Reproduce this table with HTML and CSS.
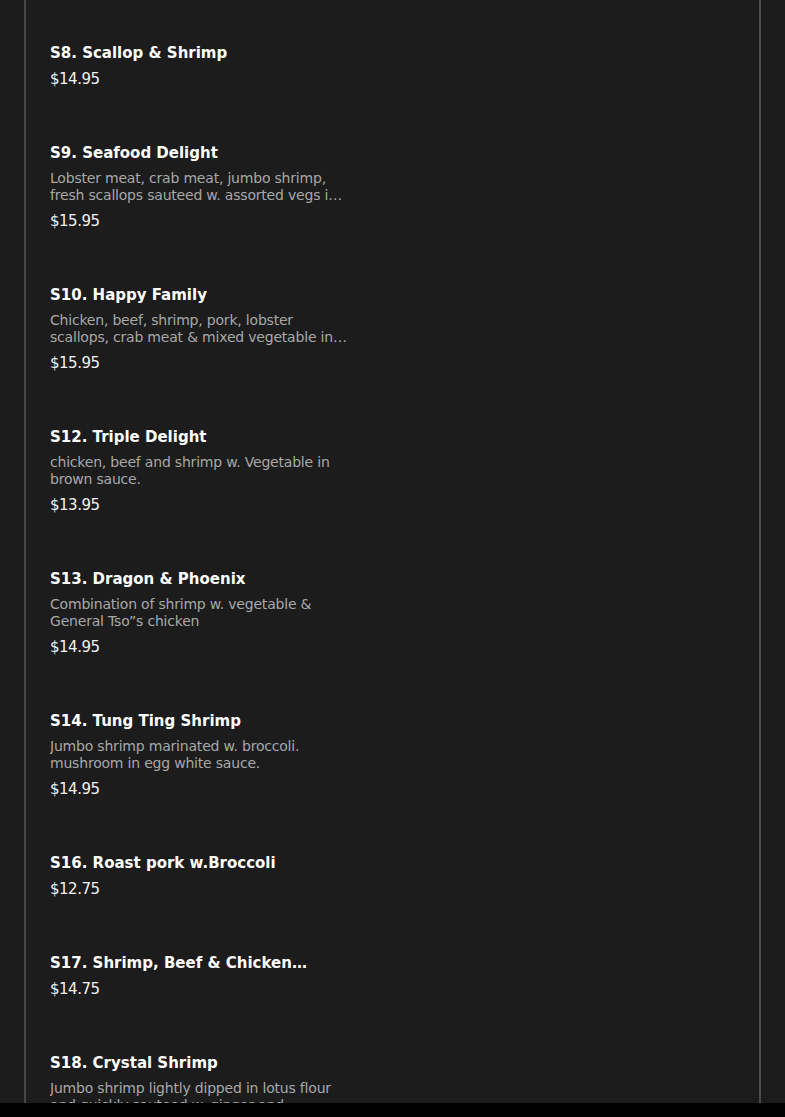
FILE: index.html
```html
<!DOCTYPE html>
<html lang="en">
<head>
<meta charset="utf-8">
<title>Menu</title>
<link rel="stylesheet" href="styles.css">
</head>
<body>
<main class="menu">
  <section class="item">
    <h3 class="title">S8. Scallop &amp; Shrimp</h3>
    <div class="price">$14.95</div>
  </section>
  <section class="item">
    <h3 class="title">S9. Seafood Delight</h3>
    <p class="desc">Lobster meat, crab meat, jumbo shrimp, fresh scallops sauteed w. assorted vegs in white sauce.</p>
    <div class="price">$15.95</div>
  </section>
  <section class="item">
    <h3 class="title">S10. Happy Family</h3>
    <p class="desc">Chicken, beef, shrimp, pork, lobster scallops, crab meat &amp; mixed vegetable in brown sauce.</p>
    <div class="price">$15.95</div>
  </section>
  <section class="item">
    <h3 class="title">S12. Triple Delight</h3>
    <p class="desc">chicken, beef and shrimp w. Vegetable in brown sauce.</p>
    <div class="price">$13.95</div>
  </section>
  <section class="item">
    <h3 class="title">S13. Dragon &amp; Phoenix</h3>
    <p class="desc">Combination of shrimp w. vegetable &amp; General Tso”s chicken</p>
    <div class="price">$14.95</div>
  </section>
  <section class="item">
    <h3 class="title">S14. Tung Ting Shrimp</h3>
    <p class="desc">Jumbo shrimp marinated w. broccoli. mushroom in egg white sauce.</p>
    <div class="price">$14.95</div>
  </section>
  <section class="item">
    <h3 class="title">S16. Roast pork w.Broccoli</h3>
    <div class="price">$12.75</div>
  </section>
  <section class="item">
    <h3 class="title">S17. Shrimp, Beef &amp; Chicken Combination</h3>
    <div class="price">$14.75</div>
  </section>
  <section class="item">
    <h3 class="title">S18. Crystal Shrimp</h3>
    <p class="desc">Jumbo shrimp lightly dipped in lotus flour and quickly sauteed w. ginger and scallions.</p>
    <div class="price">$14.95</div>
  </section>
</main>
<div class="bottom-bar"></div>
</body>
</html>
```
FILE: styles.css
```css
html, body {
  margin: 0;
  padding: 0;
  background: #1c1c1c;
  color: #ffffff;
  font-family: "DejaVu Sans", "Liberation Sans", sans-serif;
}

.menu {
  margin: 0 24px;
  padding: 16px 0 40px;
  border-left: 2px solid #474747;
  border-right: 2px solid #4a4a4a;
  display: flex;
  flex-direction: column;
}

.item {
  padding: 24px 24px 23px;
  width: 300px;
}

.title {
  margin: 0;
  padding-top: 2px;
  font-size: 15px;
  font-weight: 700;
  line-height: 22px;
  color: #ffffff;
  display: -webkit-box;
  -webkit-box-orient: vertical;
  -webkit-line-clamp: 1;
  overflow: hidden;
}

.desc {
  margin: 6px 0 2px;
  font-size: 14px;
  line-height: 17px;
  letter-spacing: -0.2px;
  color: #a8a8a8;
  display: -webkit-box;
  -webkit-box-orient: vertical;
  -webkit-line-clamp: 2;
  overflow: hidden;
}

.price {
  padding-top: 1px;
  font-size: 15px;
  letter-spacing: -0.5px;
  line-height: 28px;
  color: #f2f2f2;
}

.bottom-bar {
  position: fixed;
  left: 0;
  right: 0;
  bottom: 0;
  height: 14px;
  background: #000;
}
```
